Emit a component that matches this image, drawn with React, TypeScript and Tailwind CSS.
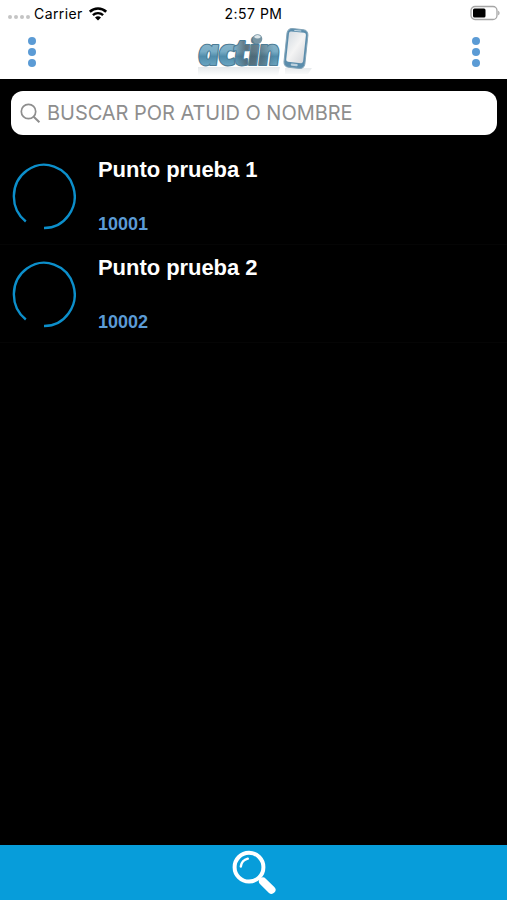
const points = [
  { id: "10001", name: "Punto prueba 1" },
  { id: "10002", name: "Punto prueba 2" },
];

const StatusBar = () => (
  <div className="grid h-[26px] grid-cols-3 items-center font-['Inter',sans-serif] text-[14px] text-black">
    <div className="flex items-center pl-2">
      <div className="mt-[8px] flex gap-[2px]">
        {[0, 1, 2, 3].map((i) => (
          <span key={i} className="size-[4px] rounded-full bg-[#c4c4c4]" />
        ))}
      </div>
      <span className="ml-[4px] tracking-[0.4px]">Carrier</span>
      <svg className="ml-[5px]" width="20" height="15" viewBox="0 0 20 15" fill="none" stroke="#000">
        <path d="M1.8 5.8a11.8 11.8 0 0 1 16.4 0" strokeWidth="2.6" />
        <path d="M4.9 9.2a7.4 7.4 0 0 1 10.2 0" strokeWidth="2.4" />
        <path d="M7 11.6a4.4 4.4 0 0 1 6 0l-3 3z" fill="#000" stroke="none" />
      </svg>
    </div>
    <span className="text-center tracking-[0.5px]">2:57 PM</span>
    <div className="flex justify-end pr-[6px]">
      <svg width="31" height="16" viewBox="0 0 31 16">
        <rect x="1" y="1.5" width="26" height="13" rx="4" fill="none" stroke="#a5a5a5" strokeWidth="1.3" />
        <rect x="3" y="3.5" width="12.5" height="9" rx="1.5" fill="#000" />
        <path d="M28.2 5.7c1.8.6 1.8 4 0 4.6z" fill="#a5a5a5" />
      </svg>
    </div>
  </div>
);

const Dots = () => (
  <button className="flex flex-col gap-[3px]" aria-label="Menu">
    {[0, 1, 2].map((i) => (
      <span key={i} className="size-[8px] rounded-full bg-[#5b9bd5]" />
    ))}
  </button>
);

const Logo = () => (
  <svg width="116" height="53" viewBox="0 0 116 53" className="overflow-visible">
    <defs>
      <linearGradient id="word" gradientUnits="userSpaceOnUse" x1="0" y1="16" x2="0" y2="40">
        <stop offset="0" stopColor="#8bb4c9" />
        <stop offset="0.4" stopColor="#78adc6" />
        <stop offset="0.6" stopColor="#4f8cab" />
        <stop offset="1" stopColor="#6ba6c2" />
      </linearGradient>
      <linearGradient id="shade" gradientUnits="userSpaceOnUse" x1="32" x2="72">
        <stop offset="0" stopColor="#4b5155" stopOpacity="0" />
        <stop offset="0.3" stopColor="#4b5155" stopOpacity="0.65" />
        <stop offset="0.65" stopColor="#4b5155" stopOpacity="0.5" />
        <stop offset="1" stopColor="#4b5155" stopOpacity="0" />
      </linearGradient>
      <linearGradient id="screen" x1="0" x2="1" y2="1">
        <stop offset="0" stopColor="#d5dce2" />
        <stop offset="0.5" stopColor="#f4f4f4" />
        <stop offset="1" stopColor="#d5d7db" />
      </linearGradient>
      <linearGradient id="floor" x1="0" y1="0" x2="0" y2="1">
        <stop offset="0" stopColor="#a9b4bc" stopOpacity="0.3" />
        <stop offset="1" stopColor="#a9b4bc" stopOpacity="0" />
      </linearGradient>
    </defs>
    <path d="M2 41h82l-2 9H2zM89 42h27l-4 6H89z" fill="url(#floor)" />
    <g
      className="font-['Open_Sans',sans-serif] text-[36px] font-extrabold italic"
      transform="translate(4 0) skewX(5)"
      strokeLinejoin="round"
    >
      <text x="-5 15.5 31 45.5 55.5" y="38.5" fill="url(#word)" stroke="#4d7c95" strokeWidth="2.2" paintOrder="stroke">
        actin
      </text>
      <text x="-5 15.5 31 45.5 55.5" y="38.5" fill="url(#shade)" aria-hidden="true">
        actin
      </text>
    </g>
    <circle cx="61.5" cy="13" r="4.8" fill="#7694a3" />
    <path d="M58 11a4 4 0 0 1 7 0q-3.5 3-7 0" fill="#dce6ea" />
    <g transform="translate(-1.5 0) rotate(6 101 22)">
      <rect x="91" y="3" width="21" height="39" rx="5" fill="#5b8dac" stroke="#86a6b9" />
      <rect x="93" y="6" width="17" height="30.5" rx="2" fill="url(#screen)" />
      <path d="M98 4.6h7" stroke="#c8dce7" />
      <rect x="98" y="37.8" width="7" height="2.2" rx="1" fill="#bcd1de" />
    </g>
  </svg>
);

const Header = () => (
  <header className="h-[79px] bg-white">
    <StatusBar />
    <div className="flex h-[53px] items-start justify-between pr-[27px] pl-[28px]">
      <div className="pt-[11px]">
        <Dots />
      </div>
      <Logo />
      <div className="pt-[11px]">
        <Dots />
      </div>
    </div>
  </header>
);

const PointRow = ({ id, name }: { id: string; name: string }) => (
  <li className="flex h-[98px] border-b border-[#050505] pl-3">
    <svg className="mt-4 shrink-0" width="64" height="68" viewBox="0 0 64 68" fill="none">
      <path d="M13.8 58.5A30.4 31.6 0 1 1 32 65" stroke="#0c8fcb" strokeWidth="2.4" />
    </svg>
    <div className="flex flex-col pt-[10px] pl-[22px] font-['Liberation_Sans',Arial,sans-serif] font-bold">
      <span className="text-[22px] leading-[26px] tracking-[-0.05px] text-white">{name}</span>
      <span className="mt-[31px] text-[18px] leading-[20px] text-[#5b9bd5]">{id}</span>
    </div>
  </li>
);

const App = () => (
  <div className="flex h-[900px] w-[507px] flex-col overflow-hidden bg-black">
    <Header />
    <div className="pt-3 pr-[10px] pb-3 pl-[11px]">
      <div className="flex h-[44px] items-center rounded-[12px] bg-white pl-[9px]">
        <svg width="21" height="21" viewBox="0 0 21 21" fill="none" stroke="#8e8e8e" strokeWidth="1.7">
          <circle cx="8.5" cy="8.5" r="7.2" />
          <path d="M13.7 13.7l5.7 5.6" strokeWidth="2" />
        </svg>
        <span className="ml-[6px] font-['Inter',sans-serif] text-[20px] tracking-[-0.04px] text-[#8e8e8e]">
          BUSCAR POR ATUID O NOMBRE
        </span>
      </div>
    </div>
    <ul className="flex-1">
      {points.map((point) => (
        <PointRow key={point.id} {...point} />
      ))}
    </ul>
    <footer className="flex h-[55px] justify-center bg-[#079dda]">
      <svg className="mt-[5px]" width="44" height="46" viewBox="0 0 44 46" fill="none" stroke="#fff">
        <circle cx="17" cy="17.2" r="14.4" strokeWidth="4" />
        <path d="M8.8 16.5q1-6.4 7-7.8" strokeWidth="2.4" strokeLinecap="round" />
        <path d="M26.5 27.5l3 3" strokeWidth="3.4" />
        <path d="M31 31.5l8.5 8.3" strokeWidth="8" strokeLinecap="round" />
      </svg>
    </footer>
  </div>
);

export default App;
